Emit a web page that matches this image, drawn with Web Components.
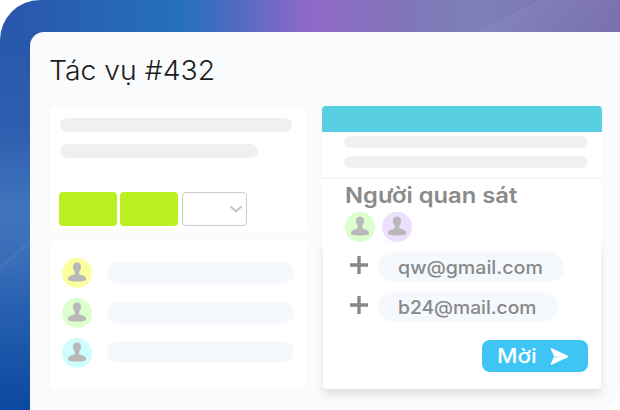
<!DOCTYPE html>
<html><head><meta charset="utf-8"><style>
html,body{margin:0;padding:0;background:#fff}
body{width:620px;height:410px;overflow:hidden;font-family:"Inter","Liberation Sans",sans-serif}
</style></head><body>
<template id="t-person"><style>:host{display:block;width:30px;height:30px;border-radius:50%;background:var(--c,#eee);flex:none}svg{display:block;width:30px;height:30px}</style>
<svg viewBox="0 0 30 30"><path fill="#b8b8b8" d="M15 4.500c-2.600 0-4 2-4 4.600 0 1.900.8 3.700 1.800 4.700v2.300c-.5.900-4.600 1.400-6 2.800-.7.700-.9 2-.9 3 2.100 1.200 5.500 1.600 9.100 1.600s7-.4 9.100-1.600c0-1-.2-2.300-.9-3-1.400-1.400-5.500-1.900-6-2.800v-2.300c1-1 1.800-2.800 1.800-4.700 0-2.600-1.400-4.600-4-4.600z"/></svg></template>
<script>
function mk(name,html){customElements.define(name,class extends HTMLElement{constructor(){super();this.attachShadow({mode:'open'}).innerHTML=html;}});}
customElements.define('x-person',class extends HTMLElement{constructor(){super();this.attachShadow({mode:'open'}).appendChild(document.getElementById('t-person').content.cloneNode(true));}});
const W='.t{display:inline-block;transform-origin:0 50%;white-space:nowrap}';
mk('x-stage',`<style>:host{display:block;width:620px;height:410px;box-sizing:border-box;padding:32px 0 0 30px;border-radius:40px 0 0 0;overflow:hidden;
background:
linear-gradient(#fff,#fff) 100% 100%/40px 40px no-repeat,
linear-gradient(139deg,transparent 0 23px,rgba(255,255,255,.08) 24px,rgba(255,255,255,.02) 26px,transparent 40px) 0 235px/30px 40px no-repeat,
linear-gradient(153deg,transparent 0 245px,rgba(255,255,255,.05) 245px,transparent 300px) 0 0/620px 32px no-repeat,
linear-gradient(90deg,#2a55ad 0,#2570bd 180px,#3f6cc0 215px,#9068c8 310px,#8275b8 400px,#7c80b8 480px,#7c78b6 530px,#7a70b0 620px) 0 0/620px 32px no-repeat,
linear-gradient(180deg,#2858ab 32px,#2d5eaf 130px,#4074bc 205px,#3d70ba 240px,#346ab6 270px,#2a62b2 300px,#0a489f 410px)}</style><slot></slot>`);
mk('x-panel',`<style>:host{display:block;width:590px;height:378px;box-sizing:border-box;background:#f9fbfd;border-radius:14px 0 27px 0;padding:21px 18px 0 20px}
.c{display:grid;grid-template-columns:256px 280px;column-gap:16px;margin-top:17px}</style><slot name="title"></slot><div class="c"><slot></slot></div>`);
mk('x-title',`<style>:host{display:block;font:300 27px/36px "Inter",sans-serif;color:#1c1c1c;height:36px;margin-left:-1px}${W}.t{transform:scaleX(1.05)}</style><span class="t"><slot></slot></span>`);
mk('x-col',`<style>:host{display:flex;flex-direction:column;gap:9px}</style><slot></slot>`);
mk('x-card',`<style>:host{display:block;background:#fff;border-radius:4px;box-sizing:border-box}</style><slot></slot>`);
mk('x-heading',`<style>:host{display:block;padding:2px 0 0 23px;font:600 22px/28px "Inter",sans-serif;color:#8a8a8a;height:33px;box-sizing:border-box}${W}.t{transform:scaleX(1.08)}</style><span class="t"><slot></slot></span>`);
mk('x-bar',`<style>:host{display:block;background:#f0f0f0;height:var(--h,14px);border-radius:8px;width:var(--w,100%)}</style>`);
mk('x-btn',`<style>:host{display:block;width:58px;height:34px;background:#b9f220;border-radius:4px}</style>`);
mk('x-select',`<style>:host{display:flex;align-items:center;justify-content:flex-end;width:66px;height:34px;box-sizing:border-box;background:#fff;border:1.5px solid #ccc;border-radius:4px;padding-right:3px}svg{display:block;width:14px;height:8px}</style><svg viewBox="0 0 14 8"><path d="M1.500 1.500 7 6.500l5.500-5" fill="none" stroke="#c4c4c4" stroke-width="2"/></svg>`);
mk('x-user-row',`<style>:host{display:flex;align-items:center;gap:15px;height:30px}.p{flex:1;height:22px;border-radius:11px;background:#f5f8fd;margin-bottom:var(--o,0)}</style><slot></slot><div class="p"></div>`);
mk('x-mail',`<style>:host{display:flex;align-items:center;gap:9px;height:30px}svg{display:block;width:20px;height:20px;flex:none;margin-top:-5px}.p{height:30px;border-radius:15px;background:#f5f8fd;padding:0 20px;font:500 18px/31px "Inter",sans-serif;color:#888;width:var(--w);box-sizing:border-box}${W}.t{transform:scaleX(var(--sx,1.09))}</style><svg viewBox="0 0 20 20"><path d="M10 1v18M1 10h18" stroke="#888" stroke-width="3.400" fill="none"/></svg><div class="p"><span class="t"><slot></slot></span></div>`);
mk('x-invite',`<style>:host{display:flex;align-items:center;width:106px;height:32px;box-sizing:border-box;padding-left:15px;background:#3ec5f6;border-radius:8px;color:#fff;font:500 20px/32px "Inter",sans-serif}${W}.t{transform:scaleX(1.12)}svg{display:block;width:19px;height:19px;margin-left:auto;margin-right:19px}</style><span class="t"><slot></slot></span><svg viewBox="0 0 19 19"><path fill="#fff" stroke="#fff" stroke-width="1.600" stroke-linejoin="round" d="M1.500 2 17.500 9.500 1.500 17 5 9.500z"/><path d="M4.500 9.500 12 9.800 5 11.500z" fill="#bfeafb"/></svg>`);
mk('x-popup',`<style>:host{display:block;box-sizing:border-box;margin:0 1px;height:147px;background:#fff;border-radius:0 0 3px 3px;box-shadow:0 6px 9px rgba(0,0,0,.1),0 0 1px rgba(0,0,0,.12);padding:10px 13px 0 26px;position:relative}
.l{display:flex;flex-direction:column;gap:10px}.b{display:flex;justify-content:flex-end;margin-top:18px}</style><div class="l"><slot name="mail"></slot></div><div class="b"><slot name="act"></slot></div>`);
</script>
<x-stage><x-panel>
<x-title slot="title">Tác vụ #432</x-title>
<x-col>
 <x-card style="height:126px;padding:12px 14px 0 10px;display:flex;flex-direction:column">
  <x-bar style="--w:232px"></x-bar><x-bar style="--w:198px;margin-top:12px"></x-bar>
  <div style="display:flex;gap:3px;margin:34px 0 0 -1px"><x-btn></x-btn><x-btn></x-btn><x-select style="margin-left:1px;width:65px"></x-select></div>
 </x-card>
 <x-card style="height:149px;padding:17px 12px 0 12px;display:flex;flex-direction:column;gap:10px">
  <x-user-row><x-person style="--c:#fbffa0"></x-person></x-user-row>
  <x-user-row><x-person style="--c:#dcffce"></x-person></x-user-row>
  <x-user-row style="--o:3px"><x-person style="--c:#cdfdfd"></x-person></x-user-row>
 </x-card>
</x-col>
<x-card style="height:283px;overflow:visible;display:flex;flex-direction:column">
 <div style="height:26px;background:#58d0e2;border-radius:4px 4px 0 0"></div>
 <div style="padding:4px 14px 0 22px;display:flex;flex-direction:column;gap:8px;height:47px;box-sizing:border-box;border-bottom:2px solid #f4f6f8"><x-bar style="--h:12px"></x-bar><x-bar style="--h:12px"></x-bar></div>
 <x-heading>Người quan sát</x-heading>
 <div style="display:flex;gap:7px;padding-left:23px;height:30px"><x-person style="--c:#dcffce"></x-person><x-person style="--c:#ebdffb"></x-person></div>
 <x-popup>
  <x-mail slot="mail" style="--w:186px">qw@gmail.com</x-mail>
  <x-mail slot="mail" style="--w:180px;--sx:1.07">b24@mail.com</x-mail>
  <x-invite slot="act">Mời</x-invite>
 </x-popup>
</x-card>
</x-panel></x-stage>
</body></html>
